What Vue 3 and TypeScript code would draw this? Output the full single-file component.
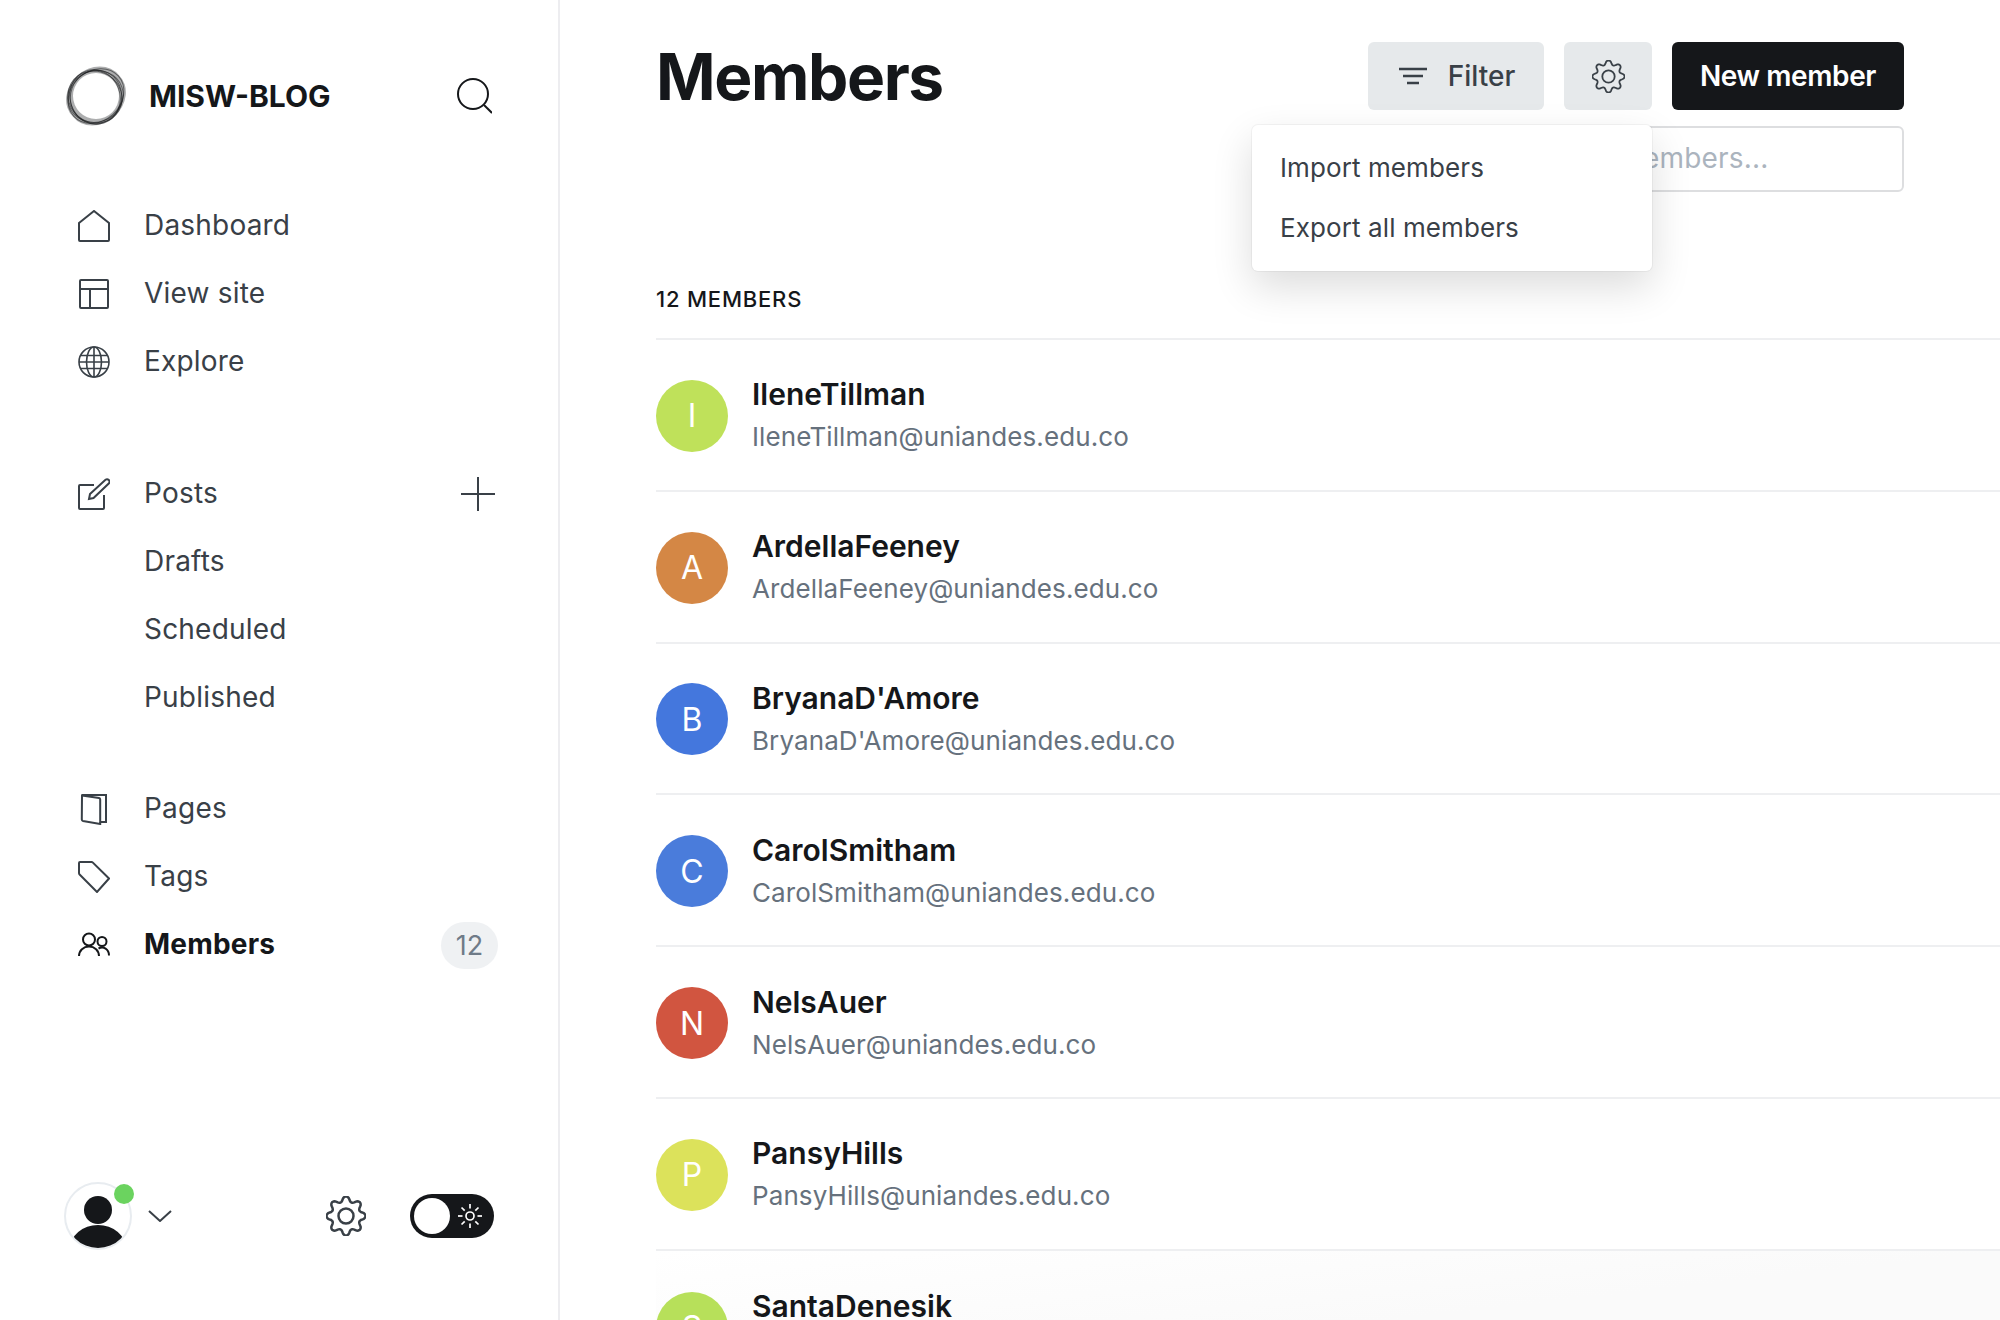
<script setup lang="ts">
interface Member { name: string; color: string }

const members: Member[] = [
  { name: 'IleneTillman', color: '#bfe15a' },
  { name: 'ArdellaFeeney', color: '#d48745' },
  { name: "BryanaD'Amore", color: '#4477dd' },
  { name: 'CarolSmitham', color: '#4a7cdb' },
  { name: 'NelsAuer', color: '#d15540' },
  { name: 'PansyHills', color: '#dce25b' },
  { name: 'SantaDenesik', color: '#b7e05a' },
]

function gearPath(c: number, outer: number, inner: number, teeth = 8): string {
  const pts: string[] = []
  const steps = 160
  for (let i = 0; i < steps; i++) {
    const t = (i / steps) * Math.PI * 2
    const w = Math.cos(t * teeth)
    const s = Math.sign(w) * Math.pow(Math.abs(w), 0.75)
    const r = inner + ((outer - inner) * (s + 1)) / 2
    const a = t - Math.PI / 2
    pts.push(`${(c + r * Math.cos(a)).toFixed(2)} ${(c + r * Math.sin(a)).toFixed(2)}`)
  }
  return 'M' + pts.join('L') + 'Z'
}
const gear = gearPath(20, 19.5, 14.5)
const rays = [0, 45, 90, 135, 180, 225, 270, 315]
const logoRings = [
  { cx: 30, cy: 30, rx: 30, ry: 25, rot: -42 },
  { cx: 29.5, cy: 30.5, rx: 28, ry: 25.5, rot: -20 },
  { cx: 29, cy: 31, rx: 27.5, ry: 25.5, rot: 30 },
  { cx: 29, cy: 31, rx: 27.5, ry: 25, rot: 70 },
  { cx: 30, cy: 31, rx: 27, ry: 25.5, rot: 110 },
]
</script>

<template>
  <div class="app">
    <aside class="side">
      <div class="brand">
        <svg class="logo" viewBox="0 0 60 60" width="60" height="60">
          <path d="M53 9.300A31 26 -42 1 0 7 50.700A31 26 -42 1 0 53 9.300ZM30 7A23 23 0 1 0 30 53A23 23 0 1 0 30 7Z" fill="#15171a" fill-rule="evenodd" opacity=".35" />
          <ellipse v-for="r in logoRings" :key="r.rot" :cx="r.cx" :cy="r.cy" :rx="r.rx" :ry="r.ry" :transform="`rotate(${r.rot} ${r.cx} ${r.cy})`" fill="none" stroke="#15171a" stroke-width="1" opacity=".55" />
        </svg>
        <span class="brand-name">MISW-BLOG</span>
        <svg class="search" viewBox="0 0 36 36" width="36" height="36" fill="none" stroke="#15171a" stroke-width="2">
          <circle cx="17" cy="16" r="15" />
          <path d="M28 27l8 8" />
        </svg>
      </div>

      <ul class="nav first">
        <li class="item">
          <svg class="ic" viewBox="0 0 32 32"><path d="M1 13 16 1l15 12v17a1 1 0 0 1-1 1H2a1 1 0 0 1-1-1Z" /></svg>
          <span>Dashboard</span>
        </li>
        <li class="item">
          <svg class="ic" viewBox="0 0 32 32"><rect x="2" y="2" width="28" height="28" rx="1" /><path d="M2 11h28M12 11v19" /></svg>
          <span>View site</span>
        </li>
        <li class="item">
          <svg class="ic thin" viewBox="0 0 32 32"><circle cx="16" cy="16" r="15" /><ellipse cx="16" cy="16" rx="7.500" ry="15" /><path d="M16 1v30M3 9.500h26M1 16h30M3 22.500h26" /></svg>
          <span>Explore</span>
        </li>
      </ul>

      <ul class="nav second">
        <li class="item">
          <svg class="ic" viewBox="0 0 32 32"><path d="M16 7H2a1 1 0 0 0-1 1v22a1 1 0 0 0 1 1h23a1 1 0 0 0 1-1V17" /><path d="M12 16 27.500 1.800a2.500 2.500 0 0 1 3.500 3.500L15.500 20l-4.500 1Z" /></svg>
          <span>Posts</span>
          <svg class="plus" viewBox="0 0 34 34"><path d="M17 0v34M0 17h34" /></svg>
        </li>
        <li class="item sub"><span>Drafts</span></li>
        <li class="item sub"><span>Scheduled</span></li>
        <li class="item sub"><span>Published</span></li>
      </ul>

      <ul class="nav third">
        <li class="item">
          <svg class="ic" viewBox="0 0 32 32"><path d="M4 2h24v27h-6" /><path d="M4 2.500 21 5a1.500 1.500 0 0 1 1.200 1.500V31L5 28a1.500 1.500 0 0 1-1.200-1.500Z" /></svg>
          <span>Pages</span>
        </li>
        <li class="item">
          <svg class="ic" viewBox="0 0 32 32"><path d="M2 1h11.500a2 2 0 0 1 1.400.6L31 17.500 19 31 1.600 13.500a2 2 0 0 1-.6-1.400V2a1 1 0 0 1 1-1Z" /></svg>
          <span>Tags</span>
        </li>
        <li class="item active">
          <svg class="ic dark" viewBox="0 0 32 26"><circle cx="11" cy="7.500" r="6" /><path d="M1 24c0-5.500 4.500-9.500 10-9.500S21 18.500 21 24" /><circle cx="24" cy="9.500" r="4.500" /><path d="M20.500 16.500c5-2.500 10.500.5 10.500 7" /></svg>
          <span>Members</span>
          <span class="badge">12</span>
        </li>
      </ul>

      <div class="foot">
        <div class="avatar-wrap">
          <svg viewBox="0 0 68 68" width="68" height="68" class="me">
            <defs><clipPath id="me-clip"><circle cx="34" cy="34" r="32" /></clipPath></defs>
            <circle cx="34" cy="34" r="33" fill="#fff" stroke="#e8ecf0" stroke-width="2" />
            <g clip-path="url(#me-clip)" fill="#15171a">
              <circle cx="34" cy="28" r="14" />
              <ellipse cx="34" cy="67" rx="28" ry="24" />
            </g>
          </svg>
          <span class="dot"></span>
        </div>
        <svg class="chev" viewBox="0 0 24 12" width="24" height="12"><path d="M1 1l11 10L23 1" /></svg>
        <svg class="foot-gear" viewBox="0 0 40 40" width="40" height="40"><path :d="gear" /><circle cx="20" cy="20" r="7.500" /></svg>
        <div class="toggle">
          <span class="knob"></span>
          <svg viewBox="0 0 24 24" width="24" height="24" class="sun">
            <circle cx="12" cy="12" r="4" />
            <path v-for="a in rays" :key="a" d="M12 0v4.500" :transform="`rotate(${a} 12 12)`" />
          </svg>
        </div>
      </div>
    </aside>

    <main class="main">
      <header class="head">
        <h1 class="title">Members</h1>
        <div class="actions">
          <div class="btns">
            <button class="btn grey filter">
              <svg viewBox="0 0 28 18" width="28" height="18"><path d="M0 2h28M4 9h20M8 16h12" /></svg>
              <span>Filter</span>
            </button>
            <button class="btn grey cog">
              <svg viewBox="0 0 40 40" width="33" height="33"><path :d="gear" /><circle cx="20" cy="20" r="7.500" /></svg>
            </button>
            <button class="btn black">New member</button>
          </div>
          <input class="find" placeholder="Search members..." />
          <div class="menu">
            <div class="menu-item">Import members</div>
            <div class="menu-item">Export all members</div>
          </div>
        </div>
      </header>

      <div class="count">12 MEMBERS</div>

      <ul class="list">
        <li v-for="m in members" :key="m.name" class="row">
          <span class="init" :style="{ background: m.color }">{{ m.name[0] }}</span>
          <div class="who">
            <div class="name">{{ m.name }}</div>
            <div class="mail">{{ m.name }}@uniandes.edu.co</div>
          </div>
        </li>
      </ul>
    </main>
  </div>
</template>

<style>
html, body { margin: 0; background: #fff; overflow: hidden; }
</style>

<style scoped>
* { box-sizing: border-box; }
.app { display: flex; height: 1320px; width: 2000px; overflow: hidden; font-family: Inter, "Liberation Sans", sans-serif; color: #15171a; background: #fff; }
.side { width: 560px; flex: none; border-right: 2px solid #ededf0; display: flex; flex-direction: column; padding: 66px 62px 70px 64px; }
.brand { display: flex; align-items: center; height: 60px; margin-left: 2px; }
.logo { flex: none; }
.brand-name { font-size: 30px; font-weight: 700; margin-left: 23px; }
.search { margin-left: auto; margin-right: 4px; }
ul { list-style: none; margin: 0; padding: 0; }
.nav { padding-left: 14px; }
.nav.first { margin-top: 66px; }
.nav.second { margin-top: 64px; }
.nav.third { margin-top: 43px; }
.item { display: flex; align-items: center; height: 68px; font-size: 28px; color: #394047; gap: 34px; letter-spacing: .2px; }
.item > span:not(.badge) { margin-top: -2px; }
.item.sub { padding-left: 66px; }
.item.active { font-weight: 700; color: #15171a; }
.ic { width: 32px; height: 32px; flex: none; fill: none; stroke: #394047; stroke-width: 2; }
.ic.thin { stroke-width: 1.600; }
.ic.dark { stroke: #15171a; height: 26px; }
.plus { width: 34px; height: 34px; margin-left: auto; margin-right: 1px; fill: none; stroke: #394047; stroke-width: 2; }
.badge { margin-left: auto; margin-right: -2px; width: 57px; height: 47px; border-radius: 24px; background: #eff1f3; color: #6f7b88; font-size: 27px; font-weight: 400; display: flex; align-items: center; justify-content: center; letter-spacing: 0; }
.foot { margin-top: auto; display: flex; align-items: center; height: 68px; }
.avatar-wrap { position: relative; width: 68px; height: 68px; flex: none; }
.me { display: block; }
.dot { position: absolute; top: 2px; right: -2px; width: 20px; height: 20px; border-radius: 50%; background: #6bd35f; }
.chev { fill: none; stroke: #394047; stroke-width: 2; margin-left: 16px; }
.foot-gear { margin-left: 154px; fill: none; stroke: #394047; stroke-width: 2.500; }
.toggle { margin-left: 44px; width: 84px; height: 44px; border-radius: 22px; background: #15171a; display: flex; align-items: center; padding: 0 4px; }
.knob { width: 36px; height: 36px; border-radius: 50%; background: #fff; flex: none; }
.sun { margin-left: 8px; fill: none; stroke: #fff; stroke-width: 1.700; }
.main { flex: 1; min-width: 0; padding: 42px 0 0 96px; }
.head { display: flex; justify-content: space-between; padding-right: 96px; height: 221px; }
.title { margin: -3px 0 0; font-size: 64px; font-weight: 700; line-height: 76px; letter-spacing: -1.400px; color: #15171a; }
.actions { position: relative; display: flex; flex-direction: column; align-items: flex-end; }
.btns { display: flex; gap: 20px; }
.btn { height: 68px; border: 0; border-radius: 6px; font-family: inherit; font-size: 28px; display: flex; align-items: center; justify-content: center; padding: 0; }
.btn.grey { background: #e6e9eb; color: #394047; font-weight: 500; }
.btn.filter { width: 176px; gap: 21px; padding-left: 2px; }
.btn.filter svg { fill: none; stroke: #394047; stroke-width: 2.500; }
.btn.cog { width: 88px; }
.btn.cog svg { fill: none; stroke: #394047; stroke-width: 2.200; }
.btn.black { width: 232px; background: #15171a; color: #fff; font-weight: 600; letter-spacing: -.4px; }
.find { margin-top: 16px; width: 484px; height: 66px; border: 2px solid #dddee0; border-radius: 6px; font-family: inherit; font-size: 28px; padding: 0 26px 2px 94px; letter-spacing: .2px; outline: none; }
.find::placeholder { color: #abb4be; opacity: 1; }
.menu { position: absolute; top: 83px; right: 252px; width: 400px; height: 146px; background: #fff; border-radius: 6px; padding: 13px 0; box-shadow: 0 0 0 1px rgba(0,0,0,.04), 0 16px 40px rgba(0,0,0,.14); }
.menu-item { height: 60px; padding: 0 28px; font-size: 26px; line-height: 60px; color: #394047; letter-spacing: .1px; }
.count { font-size: 22px; font-weight: 500; line-height: 30px; letter-spacing: .8px; margin-top: 21px; height: 54px; }
.list { border-top: 2px solid #eeeff1; margin-right: -2px; }
.row { display: flex; align-items: center; height: 151.8px; padding-top: 2px; border-bottom: 2px solid #eeeff1; gap: 24px; }
.row:last-child { background: linear-gradient(to bottom right, #fff, #fafafa 50%); border-bottom: 0; }
.init { width: 72px; height: 72px; border-radius: 50%; color: #fff; font-size: 32px; display: flex; align-items: center; justify-content: center; flex: none; }
.name { font-size: 30px; font-weight: 600; line-height: 40px; color: #15171a; }
.mail { font-size: 26px; line-height: 40px; color: #66717d; margin-top: 3px; letter-spacing: .1px; }
</style>
